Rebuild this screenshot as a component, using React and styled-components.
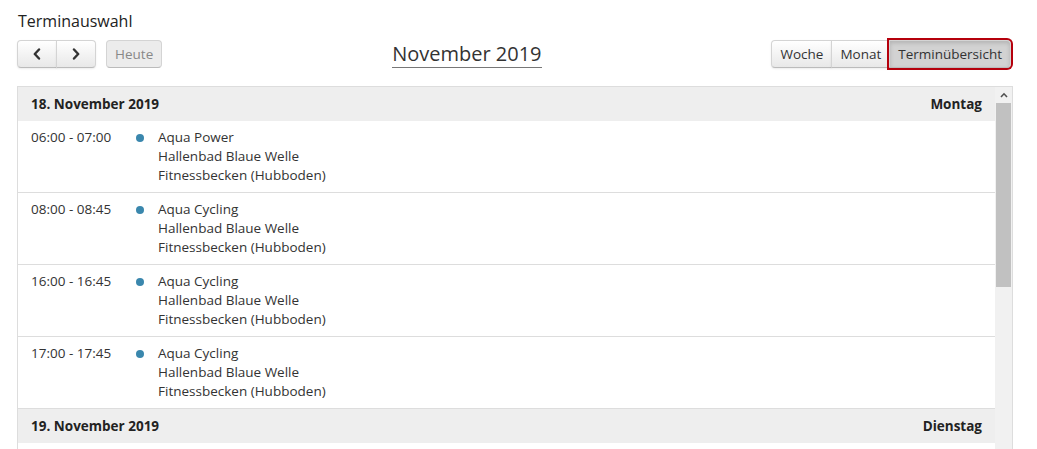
import React from 'react';
import styled, { createGlobalStyle } from 'styled-components';

const GlobalStyle = createGlobalStyle`
  html, body {
    margin: 0;
    padding: 0;
    overflow: hidden;
    background: #fff;
  }
  body {
    font-family: 'Open Sans', 'Liberation Sans', sans-serif;
    font-size: 13.5px;
    color: #333;
  }
`;

const days = [
  {
    date: '18. November 2019',
    weekday: 'Montag',
    events: [
      { time: '06:00 - 07:00', title: 'Aqua Power' },
      { time: '08:00 - 08:45', title: 'Aqua Cycling' },
      { time: '16:00 - 16:45', title: 'Aqua Cycling' },
      { time: '17:00 - 17:45', title: 'Aqua Cycling' },
    ],
  },
  {
    date: '19. November 2019',
    weekday: 'Dienstag',
    events: [],
  },
];

const Chevron = ({ dir }) => (
  <svg width="10" height="12" viewBox="0 0 10 12">
    <path
      d={dir === 'left' ? 'M7 1.5 L2.8 6 L7 10.5' : 'M3 1.5 L7.2 6 L3 10.5'}
      fill="none"
      stroke="#333"
      strokeWidth="2.4"
      strokeLinecap="round"
      strokeLinejoin="round"
    />
  </svg>
);

const App = () => (
  <>
    <GlobalStyle />
    <Page>
      <Heading>Terminauswahl</Heading>
      <Toolbar>
        <Side>
          <Group>
            <Button wide>
              <Chevron dir="left" />
            </Button>
            <Button wide>
              <Chevron dir="right" />
            </Button>
          </Group>
          <Button disabled>Heute</Button>
        </Side>
        <Center>
          <MonthTitle>November 2019</MonthTitle>
        </Center>
        <Side>
          <Group>
            <Button>Woche</Button>
            <Button>Monat</Button>
            <Button active>Terminübersicht</Button>
          </Group>
        </Side>
      </Toolbar>
      <List>
        <Scroller>
          {days.map((day) => (
            <React.Fragment key={day.date}>
              <DayHeader>
                <span>{day.date}</span>
                <span>{day.weekday}</span>
              </DayHeader>
              {day.events.map((ev, i) => (
                <EventRow key={i}>
                  <Time>{ev.time}</Time>
                  <DotCell>
                    <Dot />
                  </DotCell>
                  <Details>
                    <div>{ev.title}</div>
                    <div>Hallenbad Blaue Welle</div>
                    <div>Fitnessbecken (Hubboden)</div>
                  </Details>
                </EventRow>
              ))}
            </React.Fragment>
          ))}
        </Scroller>
        <ScrollBar>
          <ScrollArrow>
            <svg width="8" height="6" viewBox="0 0 8 6">
              <path d="M1 5 L4 1.8 L7 5" fill="none" stroke="#505050" strokeWidth="1.6" />
            </svg>
          </ScrollArrow>
          <Thumb />
        </ScrollBar>
      </List>
    </Page>
  </>
);

export default App;

const Page = styled.div`
  width: 996px;
  padding: 10px 0 0 17px;
`;

const Heading = styled.h1`
  margin: 0 0 0 1px;
  font-size: 16px;
  font-weight: 400;
  line-height: 22px;
  color: #222;
`;

const Toolbar = styled.div`
  display: flex;
  align-items: center;
  margin-top: 8px;
  height: 28px;
`;

const Side = styled.div`
  display: flex;
  align-items: center;
  gap: 10px;
`;

const Center = styled.div`
  flex: 1;
  text-align: center;
`;

const MonthTitle = styled.h2`
  display: inline-block;
  margin: 0;
  font-size: 20px;
  font-weight: 400;
  line-height: 26px;
  color: #333;
  border-bottom: 1px solid #777;
`;

const Group = styled.div`
  display: flex;
  & > button {
    border-radius: 0;
  }
  & > button + button {
    margin-left: -1px;
  }
  & > button:first-child {
    border-radius: 4px 0 0 4px;
  }
  & > button:last-child {
    border-radius: 0 4px 4px 0;
  }
`;

const Button = styled.button`
  position: relative;
  height: 28px;
  margin-right: ${({ active }) => (active ? '2px' : '0')};
  padding: 0 ${({ wide }) => (wide ? '14px' : '8px')};
  display: flex;
  align-items: center;
  justify-content: center;
  font-family: inherit;
  font-size: 13.5px;
  color: ${({ disabled }) => (disabled ? '#888' : '#333')};
  border: 1px solid #d4d4d4;
  border-bottom-color: #bbb;
  border-radius: 4px;
  background: ${({ active, disabled }) =>
    active ? '#d2d2d2' : disabled ? '#ececec' : 'linear-gradient(#fff, #e8e8e8)'};
  box-shadow: ${({ active, disabled }) =>
    active
      ? 'inset 0 2px 4px rgba(0,0,0,0.15), 0 0 0 2px #b5000c'
      : disabled
      ? 'none'
      : 'inset 0 1px 0 rgba(255,255,255,0.2), 0 1px 2px rgba(0,0,0,0.08)'};
  z-index: ${({ active }) => (active ? 2 : 0)};
  cursor: pointer;
`;

const List = styled.div`
  display: flex;
  margin-top: 18px;
  height: 400px;
  border: 1px solid #ddd;
  overflow: hidden;
`;

const Scroller = styled.div`
  flex: 1;
  overflow: hidden;
`;

const ScrollBar = styled.div`
  width: 17px;
  flex-shrink: 0;
  display: flex;
  flex-direction: column;
  background: #f1f1f1;
`;

const ScrollArrow = styled.div`
  height: 16px;
  display: flex;
  align-items: center;
  justify-content: center;
`;

const Thumb = styled.div`
  height: 184px;
  margin: 0 1px;
  background: #c1c1c1;
`;

const DayHeader = styled.div`
  display: flex;
  justify-content: space-between;
  align-items: center;
  height: 34px;
  padding: 0 13px;
  background: #eee;
  font-weight: 700;
  color: #222;
`;

const EventRow = styled.div`
  display: flex;
  padding: 7px 13px;
  line-height: 19px;
  border-bottom: 1px solid #ddd;
`;

const Time = styled.div`
  width: 105px;
  flex-shrink: 0;
`;

const DotCell = styled.div`
  width: 22px;
  flex-shrink: 0;
  padding-top: 6px;
`;

const Dot = styled.div`
  width: 8px;
  height: 8px;
  border-radius: 50%;
  background: #3a87ad;
`;

const Details = styled.div`
  flex: 1;
`;
